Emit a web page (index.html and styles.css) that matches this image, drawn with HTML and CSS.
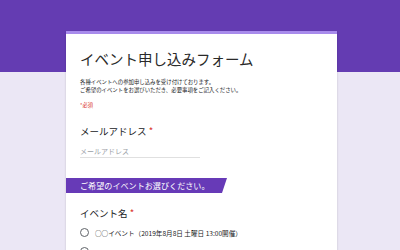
FILE: index.html
```html
<!DOCTYPE html>
<html lang="ja">
<head>
<meta charset="utf-8">
<link rel="stylesheet" href="styles.css">
</head>
<body>
<div class="page">
  <div class="card">
    <div class="head">
      <h1 class="title">イベント申し込みフォーム</h1>
      <p class="desc">各種イベントへの参加申し込みを受け付けております。<br>ご希望のイベントをお選びいただき、必要事項をご記入ください。</p>
      <p class="req">*必須</p>
    </div>
    <div class="q">
      <div class="qlabel">メールアドレス <span class="star">*</span></div>
      <div class="input">メールアドレス</div>
    </div>
    <div class="section">ご希望のイベントお選びください。</div>
    <div class="q q2">
      <div class="qlabel">イベント名 <span class="star">*</span></div>
      <div class="opt"><span class="radio"></span><span class="otext">○○イベント（2019年8月8日 土曜日 13:00開催）</span></div>
      <div class="opt"><span class="radio"></span><span class="otext"></span></div>
    </div>
  </div>
</div>
</body>
</html>
```
FILE: styles.css
```css
html, body {
  margin: 0;
  padding: 0;
}
body {
  width: 400px;
  height: 250px;
  overflow: hidden;
  background: linear-gradient(#643cb2 0, #643cb2 72px, #ebe7f5 72px);
  font-family: "Noto Sans CJK JP", Roboto, sans-serif;
}
.page {
  padding-top: 31px;
  padding-left: 66px;
}
.card {
  width: 271px;
  background: #fff;
  border-top: 3px solid #a88bec;
  box-shadow: 0 1px 2px rgba(0,0,0,0.18);
  height: 400px;
}
.head {
  padding: 15px 14px 0 14px;
}
.title {
  margin: 0;
  font-size: 14.5px;
  line-height: 19px;
  font-weight: 400;
  color: #2a2a2a;
}
.desc {
  margin: 10px 0 0 0;
  font-size: 5.4px;
  line-height: 8px;
  color: #202124;
}
.req {
  margin: 7px 0 0 0;
  font-size: 5.3px;
  line-height: 8px;
  color: #d93025;
}
.q {
  padding: 0 14px;
}
.qlabel {
  margin-top: 16px;
  font-size: 9.5px;
  line-height: 12px;
  color: #202124;
}
.star {
  color: #d93025;
}
.input {
  margin-top: 9px;
  width: 120px;
  font-size: 7px;
  line-height: 10px;
  color: #9aa0a6;
  border-bottom: 1px solid #e0e0e0;
  padding-bottom: 1px;
}
.section {
  margin-top: 20px;
  width: 147px;
  height: 15px;
  padding-left: 14px;
  background: #673ab7;
  color: #fff;
  font-size: 8.1px;
  line-height: 15px;
  clip-path: polygon(0 0, 100% 0, calc(100% - 5px) 100%, 0 100%);
}
.q2 .qlabel {
  margin-top: 14px;
}
.opt {
  display: flex;
  align-items: center;
  gap: 6px;
  margin-top: 8px;
  height: 11px;
}
.radio {
  width: 7px;
  height: 7px;
  border: 1.3px solid #5f6368;
  border-radius: 50%;
  flex: none;
}
.otext {
  font-size: 6.6px;
  color: #202124;
}
```
